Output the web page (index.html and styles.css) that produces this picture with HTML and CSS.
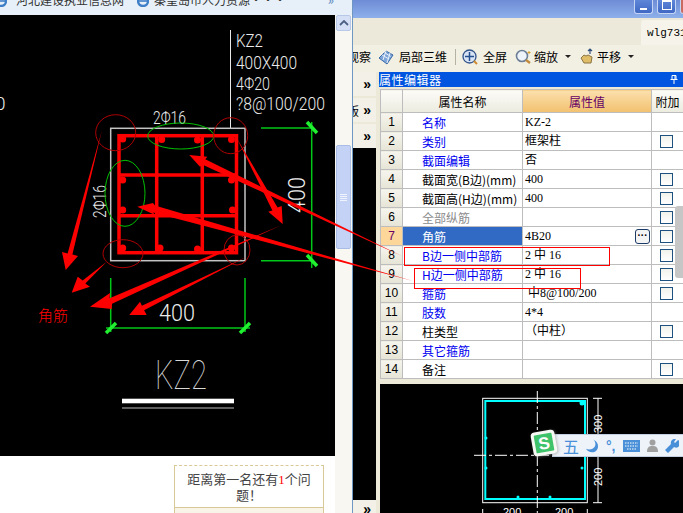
FILE: index.html
```html
<!DOCTYPE html>
<html lang="zh-CN">
<head>
<meta charset="utf-8">
<title>属性编辑器</title>
<link rel="stylesheet" href="styles.css">
</head>
<body>
<div class="screen">
  <section class="browser">
    <div class="tabs">
      <svg class="tab-e first" viewBox="0 0 12 12"><circle cx="6" cy="6" r="5" fill="none" stroke="#3f7fc8" stroke-width="2.4"/><path d="M1 6h10" stroke="#3f7fc8" stroke-width="1.6"/></svg>
      <span class="tab-label">河北建设执业信息网</span>
      <svg class="tab-e" viewBox="0 0 12 12"><circle cx="6" cy="6" r="5" fill="none" stroke="#3f7fc8" stroke-width="2.4"/><path d="M1 6h10" stroke="#3f7fc8" stroke-width="1.6"/></svg>
      <span class="tab-label">秦皇岛市人力资源···</span>
      <span class="tab-more">»</span>
    </div>
    <div class="browser-body">
      <div class="page">
        <svg class="cad" viewBox="0 15 335 441" width="335" height="441">
          <g class="cad-text">
            <path class="white-line" d="M230.5 30V128"/>
            <text x="236" y="47" textLength="27" lengthAdjust="spacingAndGlyphs" font-size="19">KZ2</text>
            <text x="236" y="69" textLength="61" lengthAdjust="spacingAndGlyphs" font-size="19">400X400</text>
            <text x="236" y="90" textLength="34" lengthAdjust="spacingAndGlyphs" font-size="19">4Φ20</text>
            <text x="236" y="110" textLength="89" lengthAdjust="spacingAndGlyphs" font-size="19">?8@100/200</text>
            <text x="-5" y="110" font-size="19">0</text>
            <text x="153" y="124" textLength="33" lengthAdjust="spacingAndGlyphs" font-size="19">2Φ16</text>
            <text transform="translate(106 218) rotate(-90)" textLength="33" lengthAdjust="spacingAndGlyphs" font-size="19">2Φ16</text>
            <text transform="translate(305 213) rotate(-90)" textLength="36" lengthAdjust="spacingAndGlyphs" font-size="23">400</text>
            <text x="159" y="321" textLength="36" lengthAdjust="spacingAndGlyphs" font-size="24">400</text>
            <text class="big" x="155" y="389" textLength="52" lengthAdjust="spacingAndGlyphs" font-size="40">KZ2</text>
          </g>
          <rect class="outline" x="110.7" y="128.3" width="134.3" height="132.4"/>
          <g class="rebar">
            <rect x="119" y="135.7" width="117.5" height="117"/>
            <path d="M156.7 135V252M202.3 135V252M119 175H236M119 215.7H236"/>
          </g>
          <g class="rebar-dots">
            <circle cx="122.7" cy="139" r="3.5"/><circle cx="161.7" cy="139.5" r="3.5"/><circle cx="197.5" cy="140" r="3.5"/><circle cx="231.5" cy="139.5" r="3.5"/>
            <circle cx="122.7" cy="180" r="3.5"/><circle cx="231.5" cy="180" r="3.5"/><circle cx="122.7" cy="210" r="3.5"/><circle cx="232.5" cy="210" r="3.5"/>
            <circle cx="122.7" cy="248" r="3.5"/><circle cx="160" cy="248" r="3.5"/><circle cx="197.5" cy="249" r="3.5"/><circle cx="231.5" cy="248" r="3.5"/>
          </g>
          <g class="dim-green">
            <path d="M261 128H314M261 260.7H314M311.7 122V268M110.7 278V332M245 278V332M106 328H250"/>
            <path class="tick" d="M307 122L317 133M307 255L317 266M106 333L116 323M240 333L250 323"/>
            <ellipse cx="180.7" cy="136" rx="33" ry="13"/>
            <ellipse cx="125" cy="193.3" rx="20" ry="33"/>
          </g>
          <g class="marks">
            <ellipse cx="115.7" cy="132.7" rx="20" ry="18"/>
            <ellipse cx="230.7" cy="135.7" rx="17" ry="18"/>
            <ellipse cx="123" cy="253.7" rx="20" ry="14"/>
            <ellipse cx="237" cy="250" rx="13" ry="15"/>
          </g>
          <g class="title-rule">
            <rect x="122" y="398.7" width="112" height="4.6"/>
            <rect class="thin" x="122" y="407.5" width="112" height="1"/>
          </g>
        </svg>
        <div class="below">
          <div class="rank-card">
            <p class="rank-text">距离第一名还有<em>1</em>个问题！</p>
            <div class="rank-foot"></div>
          </div>
        </div>
      </div>
      <div class="vscroll">
        <div class="vs-up"><svg viewBox="0 0 10 6" width="10" height="6"><path d="M1 5l4-4 4 4" fill="none" stroke="#4d6185" stroke-width="1.8"/></svg></div>
        <div class="vs-thumb"><span></span><span></span><span></span><span></span></div>
      </div>
    </div>
  </section>

  <section class="app">
    <div class="titlebar">
      <span class="winbtn"><i class="min"></i></span>
      <span class="winbtn"><i class="max"></i></span>
      <span class="winbtn close"></span>
    </div>
    <div class="tabstrip"><span class="user-tab">wlg731</span></div>
    <div class="toolbar">
      <span class="tool-cut">观察</span>
      <svg class="ic ic-3d" viewBox="0 0 16 16"><path d="M1 9l7-7 7 4-6 9z" fill="#7ea6d8" stroke="#3a6aa8"/><path d="M4 6l7 4M6.500 3.500l6 4M8 2L5 11M12 4L9 14" stroke="#e8f0fa" fill="none"/></svg>
      <span class="tool-label">局部三维</span>
      <span class="tool-sep"></span>
      <svg class="ic ic-full" viewBox="0 0 16 16"><circle cx="7.500" cy="7.500" r="6.500" fill="#d8e4f4" stroke="#33558c" stroke-width="1.300"/><path d="M7.500 3v9M3 7.500h9" stroke="#24508f" stroke-width="1.500"/><path d="M12 12l3 3" stroke="#d08a30" stroke-width="2"/></svg>
      <span class="tool-label">全屏</span>
      <svg class="ic ic-zoom" viewBox="0 0 17 16"><circle cx="7" cy="7" r="5.500" fill="#eef3fa" stroke="#6d7f96" stroke-width="1.600"/><path d="M11 11l4 3" stroke="#c08a3a" stroke-width="2.200"/><path d="M14 2v3M12.500 3.500h3" stroke="#d8a030"/></svg>
      <span class="tool-label tight">缩放</span>
      <span class="caret"></span>
      <svg class="ic ic-pan" viewBox="0 0 16 17"><path d="M2 10l3-3 2 1 2-1 2 1 2 1-1 6H5z" fill="#e0bd68" stroke="#8a7444"/><path d="M11 6V1M9 3l2-2 2 2" stroke="#34507c" fill="none" stroke-width="1.200"/></svg>
      <span class="tool-label tight">平移</span>
      <span class="caret"></span>
    </div>
    <div class="workspace">
      <aside class="dock">
        <div class="dock-tab">»</div>
        <div class="dock-tab"><span class="dock-cut">版</span>»</div>
        <div class="dock-tab">»</div>
        <div class="dock-black"></div>
        <div class="dock-tab dock-end">»</div>
      </aside>
      <div class="editor">
        <div class="ed-title"><span>属性编辑器</span>
          <svg class="pin" viewBox="0 0 8 9" width="8" height="9"><path d="M2 .5h4v4H2zM.5 4.500h7M4 5v4M5 1v3" fill="none" stroke="#fff"/></svg>
        </div>
        <div class="grid-wrap">
          <table class="grid">
            <colgroup><col class="c-no"><col class="c-name"><col class="c-val"><col class="c-add"></colgroup>
            <thead>
              <tr><th></th><th>属性名称</th><th class="th-val">属性值</th><th>附加</th></tr>
            </thead>
            <tbody>
              <tr><td class="no">1</td><td class="name blue">名称</td><td class="val">KZ-2</td><td></td></tr>
              <tr><td class="no">2</td><td class="name blue">类别</td><td class="val">框架柱</td><td><span class="chk"></span></td></tr>
              <tr><td class="no">3</td><td class="name blue">截面编辑</td><td class="val">否</td><td></td></tr>
              <tr><td class="no">4</td><td class="name">截面宽(B边)(mm)</td><td class="val">400</td><td><span class="chk"></span></td></tr>
              <tr><td class="no">5</td><td class="name">截面高(H边)(mm)</td><td class="val">400</td><td><span class="chk"></span></td></tr>
              <tr><td class="no">6</td><td class="name gray">全部纵筋</td><td class="val"></td><td><span class="chk"></span></td></tr>
              <tr class="sel"><td class="no">7</td><td class="name">角筋</td><td class="val"><div class="val-row">4B20<span class="more-btn">···</span></div></td><td><span class="chk"></span></td></tr>
              <tr><td class="no">8</td><td class="name blue">B边一侧中部筋</td><td class="val">2 中 16</td><td><span class="chk"></span></td></tr>
              <tr><td class="no">9</td><td class="name blue">H边一侧中部筋</td><td class="val">2 中 16</td><td><span class="chk"></span></td></tr>
              <tr><td class="no">10</td><td class="name blue">箍筋</td><td class="val">&nbsp;中8@100/200</td><td><span class="chk"></span></td></tr>
              <tr><td class="no">11</td><td class="name blue">肢数</td><td class="val">4*4</td><td></td></tr>
              <tr><td class="no">12</td><td class="name">柱类型</td><td class="val">（中柱）</td><td><span class="chk"></span></td></tr>
              <tr><td class="no">13</td><td class="name blue">其它箍筋</td><td class="val"></td><td></td></tr>
              <tr><td class="no">14</td><td class="name">备注</td><td class="val"></td><td><span class="chk"></span></td></tr>
            </tbody>
          </table>
          <div class="grid-scroll"></div>
        </div>
        <div class="preview">
          <svg class="section-svg" viewBox="380 383 303 130" width="303" height="130">
            <rect class="sec-out" x="482.700" y="397.300" width="104.600" height="104.400"/>
            <rect class="sec-stir" x="485.300" y="400" width="99.700" height="98"/>
            <path class="sec-center" d="M537.300 390V513M474 454.300H600"/>
            <path class="sec-dim" d="M598 397.300V501.700M593 397.300H602M593 501.700H602M482.700 508V513M587.300 508V513"/>
            <g class="sec-dots"><circle cx="518" cy="496" r="1.500"/><circle cx="550" cy="496" r="1.500"/><circle cx="582" cy="402" r="2.500"/><circle cx="582" cy="467" r="1.500"/><circle cx="486" cy="467" r="1.500"/><circle cx="486" cy="437" r="1.500"/></g>
            <g class="sec-text">
              <text transform="translate(602 432) rotate(-90)">300</text>
              <text transform="translate(602 485) rotate(-90)">200</text>
              <text x="503" y="515">200</text>
              <text x="555" y="515">200</text>
            </g>
          </svg>
        </div>
      </div>
    </div>
  </section>

  <svg class="overlay" viewBox="0 0 683 513" width="683" height="513">
    <polygon points="401.700,256 205.300,159.300 207.300,156.700 189.300,155 200,166.700 202.700,164.700"/>
    <polygon points="413,281 154.900,205.600 153,203 137.300,206.700 155,215 153.100,212.400"/>
    <polygon points="281.700,225 109.600,298.200 110,293 90,306.700 111.700,309 112,303.800"/>
    <polygon points="246.700,256.700 141.900,305.800 140,301.700 129.300,315 146.700,315 144.100,310.200"/>
    <polygon points="236.700,138 277.600,207.600 281.700,206 282.700,224 268.300,211.700 272.400,210.400"/>
    <polygon points="102,130 72.400,254.600 78,256 65.700,270 62,252 67.600,253.400"/>
    <polygon points="106.700,261.700 82.700,280.500 77.700,276.700 71.700,292.700 90,286.700 85.300,283.500"/>
    <rect class="callout" x="404.500" y="247.500" width="205" height="18"/>
    <rect class="callout" x="414.500" y="268.500" width="166" height="20"/>
    <text class="corner-note" x="38" y="321">角筋</text>
  </svg>

  <div class="ime">
    <span class="ime-logo"><b>S</b></span>
    <div class="ime-bar">
      <span class="ime-wu">五</span>
      <svg class="ime-moon" viewBox="0 0 14 14" width="13" height="14"><path d="M8 0c3 3 3 8-1 10-2 1-5 1-7 0 2 4 8 5 11 2 3-3 3-9-3-12z" fill="#4a90d9"/></svg>
      <span class="ime-punct">°,</span>
      <svg viewBox="0 0 17 12" width="17" height="12"><rect width="17" height="12" fill="#4a90d9"/><path d="M2 3h13M2 6h13M4 9h9" stroke="#fff" stroke-dasharray="1.500 1"/></svg>
      <svg viewBox="0 0 11 13" width="11" height="13"><circle cx="5.500" cy="3.500" r="3" fill="#a0a0a0"/><path d="M0 13c0-5 2-6 5.500-6s5.500 1 5.500 6z" fill="#a0a0a0"/></svg>
      <svg viewBox="0 0 14 14" width="14" height="14"><path d="M13 1l-3 3-1-1 2-3a4 4 0 0 0-5 5L0 11l3 3 6-6a4 4 0 0 0 4-7z" fill="#4a90d9"/></svg>
    </div>
  </div>
</div>
</body>
</html>
```

FILE: styles.css
```css
* { box-sizing: border-box; }
html, body { margin: 0; padding: 0; }
body { width: 683px; height: 513px; overflow: hidden; background: #fff; font-family: "Noto Sans CJK SC", "Liberation Sans", sans-serif; font-size: 12px; color: #000; }
.screen { position: relative; width: 683px; height: 513px; display: flex; overflow: hidden; }

/* left browser */
.browser { width: 353px; height: 513px; display: flex; flex-direction: column; border-right: 1px solid #6f97c4; flex: none; }
.tabs { height: 15px; display: flex; align-items: flex-start; background: #e7f0f9; overflow: hidden; flex: none; color: #333; }
.tab-e { width: 12px; height: 12px; margin: -5px 5px 0 0; flex: none; }
.tab-e.first { margin-left: -5px; margin-right: 9px; }
.tab-label { width: 121px; line-height: 12px; margin-top: -6px; white-space: nowrap; }
.tab-label + .tab-e { margin-left: 0; }
.tab-more { margin-left: auto; margin-right: 18px; margin-top: -7px; color: #5a86bd; font-size: 13px; line-height: 14px; }
.browser-body { flex: 1; display: flex; min-height: 0; }
.page { width: 335px; display: flex; flex-direction: column; flex: none; background: #fff; }
.cad { display: block; background: #000; flex: none; }
.cad-text text { font-family: Roboto, "Liberation Sans", sans-serif; font-weight: 300; fill: #ececec; }
.cad-text .big { font-weight: 100; fill: #d8d8d8; }
.white-line { stroke: #e8e8e8; stroke-width: 1; fill: none; }
.outline { fill: none; stroke: #c4c4c4; stroke-width: 1.500; }
.rebar { fill: none; stroke: #ff0000; stroke-width: 3.500; }
.rebar-dots circle { fill: #ff0000; }
.dim-green { fill: none; stroke: #00c000; stroke-width: 1; }
.dim-green path { stroke: #00c818; stroke-width: 1.500; }
.dim-green .tick { stroke: #20f030; stroke-width: 3.500; }
.marks { fill: none; stroke: #b00000; stroke-width: 1; }
.title-rule rect { fill: #fff; }
.title-rule .thin { fill: #bcbcbc; }
.below { flex: 1; padding: 9px 11px 0 174px; background: #fff; min-height: 0; overflow: hidden; }
.rank-card { height: 60px; border: 1px solid #d9c898; border-top: 1px dashed #d9c898; }
.rank-text { margin: 0; padding: 5px 8px 0; font-size: 13px; line-height: 15px; color: #444; text-align: center; height: 42px; border-bottom: 1px solid #d9c898; }
.rank-text em { font-style: normal; color: #f00; font-family: "Liberation Serif", serif; }
.rank-foot { height: 20px; background: #f8f4e8; }
.vscroll { flex: 1; background: #f8f7f1; padding: 0 1px; display: flex; flex-direction: column; }
.vs-up { height: 16px; margin-top: 0; display: flex; align-items: center; justify-content: center; background: #d5e0f6; border: 1px solid #b8c8e8; border-radius: 2px; }
.vs-thumb { margin-top: 114px; height: 104px; background: #c4d3f5; border: 1px solid #a8bce6; border-radius: 2px; display: flex; flex-direction: column; align-items: center; justify-content: center; gap: 1px; }
.vs-thumb span { width: 7px; height: 1px; background: #eef3fe; }

/* right app */
.app { flex: 1; min-width: 0; display: flex; flex-direction: column; background: #ece9d8; }
.titlebar { height: 18px; flex: none; display: flex; justify-content: flex-end; align-items: flex-start; gap: 4px; background: linear-gradient(#6d8cd6, #8eb0ea); margin-right: -16px; }
.winbtn { width: 19px; height: 14px; background: linear-gradient(#5e86d8, #3e68c4); border: 1px solid #c4d4f4; border-top: 0; border-radius: 0 0 3px 3px; display: flex; align-items: flex-end; justify-content: center; padding-bottom: 3px; }
.winbtn.close { background: #c86a60; }
.min { width: 7px; height: 2px; background: #fff; }
.max { width: 10px; height: 10px; border: 1px solid #fff; border-top-width: 2px; }
.tabstrip { height: 27px; flex: none; display: flex; justify-content: flex-end; align-items: flex-end; background: #ede9da; }
.user-tab { width: 42px; height: 25px; padding-left: 6px; line-height: 26px; background: #f6f4ea; border-radius: 3px 0 0 0; font-family: "Liberation Mono", monospace; font-size: 11px; white-space: nowrap; overflow: hidden; }
.toolbar { height: 27px; flex: none; display: flex; align-items: center; padding-bottom: 4px; background: #f2efe3; overflow: hidden; }
.tool-cut { margin-left: -6px; }
.ic { flex: none; }
.ic-3d { width: 16px; height: 16px; margin-left: 7px; margin-right: 5px; }
.ic-full { width: 16px; height: 16px; margin-right: 5px; }
.ic-zoom { width: 17px; height: 16px; margin-left: 8px; margin-right: 2px; }
.ic-pan { width: 16px; height: 17px; margin-left: 8px; margin-right: 2px; }
.tool-sep { width: 1px; height: 16px; background: #b5b2a4; margin: 0 6px 0 8px; }
.caret { width: 0; height: 0; margin-left: 7px; border: 3px solid transparent; border-top: 3px solid #222; border-bottom: 0; }
.workspace { flex: 1; display: flex; min-height: 0; }
.dock { width: 26px; flex: none; display: flex; flex-direction: column; gap: 2px; padding-right: 3px; overflow: hidden; }
.dock-tab { height: 24px; flex: none; display: flex; align-items: center; justify-content: flex-end; padding-right: 5px; background: #f3f1e7; font: bold 14px "Liberation Sans", sans-serif; }
.dock-cut { margin-right: auto; margin-left: -6px; font: 12px "Noto Sans CJK SC", sans-serif; }
.dock-black { height: 352px; flex: none; margin-top: -2px; background: #000; }
.dock-end { height: 24px; margin-top: -2px; align-items: flex-start; line-height: 11px; padding-top: 4px; }
.editor { flex: 1; min-width: 0; display: flex; flex-direction: column; }
.ed-title { height: 15px; flex: none; padding-right: 5px; display: flex; align-items: center; justify-content: space-between; background: #0055e0; color: #fff; letter-spacing: .5px; line-height: 15px; }
.grid-wrap { margin: 2px 0 0 1px; position: relative; flex: none; }
.grid { width: 303px; border-collapse: collapse; table-layout: fixed; background: #fff; }
.c-no { width: 22px; } .c-name { width: 120px; } .c-val { width: 129px; } .c-add { width: 32px; }
.grid th, .grid td { padding: 0; border: 1px solid #bdbdbd; height: 19px; line-height: 17px; font-weight: 400; white-space: nowrap; overflow: hidden; }
.grid th { height: 23px; background: linear-gradient(#fcfbf7, #ecebe0); text-align: center; }
.grid .th-val { background: linear-gradient(#fbe0ad, #f2c16f); color: #660066; }
.no { text-align: center; background: linear-gradient(#f6f5ee, #e6e4d6); font-family: "Liberation Sans", sans-serif; }
.grid .name { padding-left: 19px; }
.blue { color: #0000f0; }
.gray { color: #8c8c8c; }
.grid .val { padding-left: 2px; font-family: "Liberation Serif", "Noto Sans CJK SC", serif; }
.sel .no { background: #fdd699; color: #660066; }
.sel .name { background: #316ac5; color: #fff; }
.val-row { display: flex; align-items: center; justify-content: space-between; padding-right: 1px; }
.more-btn { width: 15px; height: 15px; border: 1px solid #1c3a66; border-radius: 3px; background: #f4f4f4; font: bold 10px/11px "Liberation Sans", sans-serif; text-align: center; }
.grid td:last-child { text-align: center; vertical-align: middle; }
.chk { display: inline-block; width: 13px; height: 13px; margin: 2px 3px 0 0; vertical-align: top; border: 1px solid #1c5180; background: linear-gradient(#f2f2ec, #fff); }
.grid-scroll { position: absolute; right: 0; top: 117px; width: 8px; height: 72px; background: #c6c6c6; border-radius: 3px 0 0 3px; }
.preview { margin: 5px 0 0 1px; flex: 1; background: #000; min-height: 0; overflow: hidden; }
.section-svg { display: block; }
.sec-out { fill: none; stroke: #fff; stroke-width: 1; }
.sec-stir { fill: none; stroke: #00ffff; stroke-width: 2; }
.sec-center { fill: none; stroke: #fff; stroke-dasharray: 12 3 3 3; }
.sec-dim { fill: none; stroke: #fff; }
.sec-dots circle { fill: #00ffff; }
.sec-text text { font-family: "Liberation Sans", sans-serif; font-size: 11px; fill: #fff; }

/* overlays */
.overlay { position: absolute; left: 0; top: 0; pointer-events: none; }
.overlay polygon { fill: #ff0000; }
.callout { fill: none; stroke: #ff0000; stroke-width: 1; }
.corner-note { fill: #ff0000; font-size: 15px; font-weight: 300; font-family: "Noto Sans CJK SC", sans-serif; }
.ime { position: absolute; left: 532px; top: 431px; width: 151px; height: 26px; display: flex; align-items: center; }
.ime-logo { position: absolute; left: 0; top: 0; width: 24px; height: 24px; z-index: 1; transform: rotate(-10deg); background: #3fc36a; border: 3px solid #f6f8f4; border-radius: 4px; box-shadow: 1px 1px 3px #8888; display: flex; align-items: center; justify-content: center; color: #fff; font: bold 17px/1 "Liberation Sans", sans-serif; }
.ime-logo b { font-weight: 700; }
.ime-bar { position: absolute; left: 20px; top: 3px; width: 131px; height: 23px; background: #eef3fa; border: 1px solid #c4d0e2; border-right: 0; display: flex; align-items: center; gap: 7px; padding-left: 10px; }
.ime-wu { color: #4a90d9; font-size: 16px; line-height: 20px; }
.ime-punct { color: #4a90d9; font: bold 14px/14px "Liberation Sans", sans-serif; }
```
